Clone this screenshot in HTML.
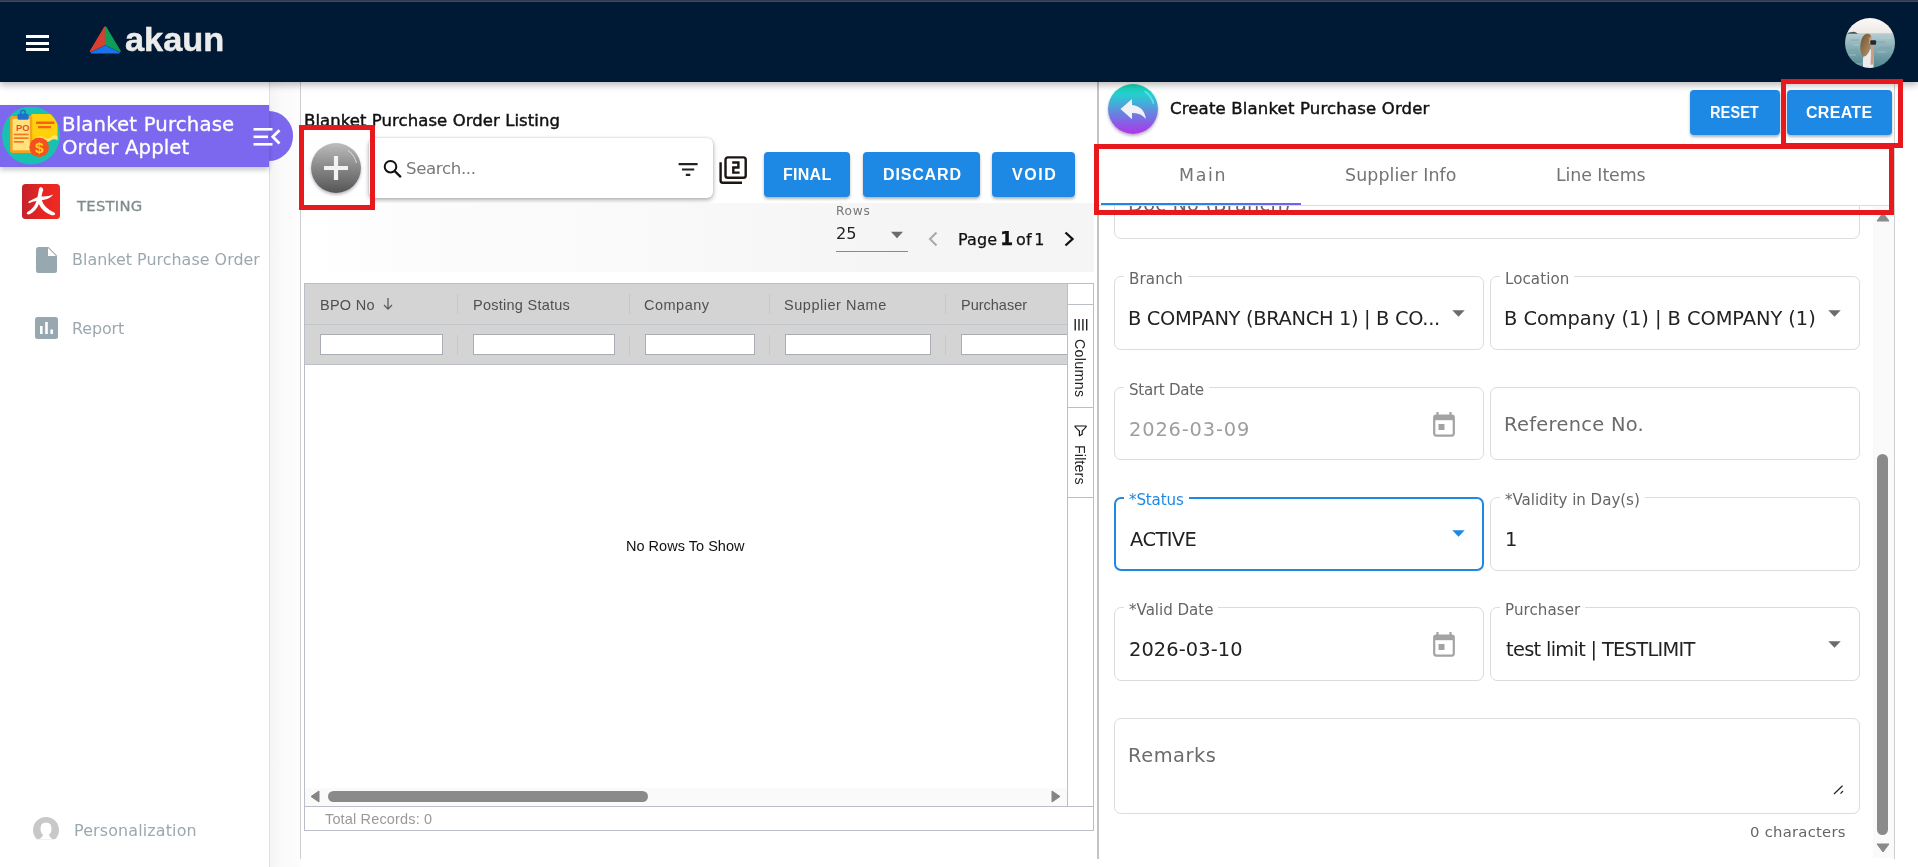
<!DOCTYPE html>
<html lang="en">
<head>
<meta charset="utf-8">
<title>Blanket Purchase Order Applet</title>
<style>
*{box-sizing:border-box;margin:0;padding:0}
html,body{width:1918px;height:867px;overflow:hidden;background:#fff}
body{position:relative;font-family:"DejaVu Sans","Liberation Sans",sans-serif;color:#000}
.lib,.bt,.gh{font-family:"Liberation Sans",sans-serif}
.abs{position:absolute}
.t{position:absolute;white-space:nowrap;line-height:1}
.t,.lbl,.val{will-change:transform}
/* header */
#hdr{left:0;top:0;width:1918px;height:82px;background:#001935;box-shadow:0 3px 7px rgba(0,0,0,.28);z-index:20}
#hdr .strip{left:0;top:0;width:1918px;height:2px;background:linear-gradient(180deg,#333a4e 0,#333a4e 50%,#464853 50%,#464853 100%)}
.hb{left:25.600px;width:23.700px;height:3px;background:#fff}
/* sidebar */
#side{left:0;top:82px;width:269.500px;height:785px;background:#fff;border-right:1px solid #dedede}
#gut{left:269.500px;top:82px;width:31px;height:785px;background:linear-gradient(90deg,#f5f5f5 0%,#fafafa 40%,#fdfdfd 100%)}
#gutb{left:300px;top:82px;width:1px;height:776.500px;background:#cecece}
.pill{left:0;top:105px;width:269.300px;height:62px;background:#7b68ee;box-shadow:0 3px 5px rgba(0,0,0,.22);z-index:5}
.pilltab{left:244px;top:111px;width:49px;height:50px;border-radius:25px;background:#7b68ee;z-index:5}
.nav{color:#9ba8ae;font-size:15.9px}
/* listing */
#list{left:301px;top:82px;width:796px;height:785px;background:#fff}
.btn{position:absolute;background:#1e88e5;color:#fff;font-weight:bold;font-size:16px;border-radius:4px;box-shadow:0 2px 3px rgba(0,0,0,.3);text-align:center}
.bt{color:#fff;font-weight:bold;font-size:16px;z-index:2}
.redbox{position:absolute;border:5px solid #e8191c;z-index:15}
/* grid */
#grid{left:304px;top:283px;width:790px;height:548px;border:1px solid #babfc7;background:#fff}
.gh{color:#505050;font-size:14.5px}
.fi{position:absolute;top:334px;height:21px;background:#fff;border:1px solid #a8adb3}
.sep{position:absolute;width:1px;background:#c6c6c6}
/* right panel */
#rp{left:1097px;top:82px;width:821px;height:776.500px;background:#fff;border-left:2px solid #c4c4c4}
.fld{position:absolute;border:1px solid #dcdcdc;border-radius:7px;background:#fff}
.lbl{position:absolute;white-space:nowrap;line-height:1;font-size:15.1px;color:#666;background:#fff;padding:0 5px}
.val{position:absolute;white-space:nowrap;line-height:1;font-size:19.4px;color:#222}
.tab{color:#747474;font-size:17.4px}
</style>
</head>
<body>

<!-- ===== HEADER ===== -->
<div id="hdr" class="abs">
  <div class="abs strip"></div>
  <div class="abs hb" style="top:35px"></div>
  <div class="abs hb" style="top:41.500px"></div>
  <div class="abs hb" style="top:48px"></div>
  <svg class="abs" style="left:88.500px;top:25.800px" width="32.500" height="30" viewBox="0 0 34 30" preserveAspectRatio="none">
    <path d="M16.6 1.2 L1.6 25.2 L16.6 18.6 Z" fill="#d9402f" stroke="#d9402f" stroke-width="1.6" stroke-linejoin="round"/>
    <path d="M17.4 1.2 L32.4 25.2 L17.4 18.6 Z" fill="#0f9d58" stroke="#0f9d58" stroke-width="1.6" stroke-linejoin="round"/>
    <path d="M17 20.2 L2.6 26.8 L31.4 26.8 Z" fill="#1a73e8" stroke="#1a73e8" stroke-width="1.6" stroke-linejoin="round"/>
  </svg>
  <span class="t lib" id="logo" style="left:124.500px;top:23px;font-size:33px;font-weight:bold;color:#ececec;letter-spacing:0px;transform:scaleX(1.04);transform-origin:left center;-webkit-text-stroke:.5px #ececec">akaun</span>
  <svg class="abs" style="left:1845px;top:18px" width="50" height="50" viewBox="0 0 50 50">
    <defs>
      <clipPath id="avc"><circle cx="25" cy="25" r="25"/></clipPath>
      <linearGradient id="sea" x1="0" y1="0" x2="0" y2="1"><stop offset="0" stop-color="#bcd2d6"/><stop offset=".35" stop-color="#8fb2b9"/><stop offset="1" stop-color="#47808a"/></linearGradient>
      <linearGradient id="sky" x1="0" y1="0" x2="0" y2="1"><stop offset="0" stop-color="#fbfbfa"/><stop offset="1" stop-color="#efe9e5"/></linearGradient>
      <linearGradient id="hair" x1="0" y1="0" x2="1" y2="1"><stop offset="0" stop-color="#6e4f33"/><stop offset="1" stop-color="#b8986a"/></linearGradient>
      <filter id="avb" x="-5%" y="-5%" width="110%" height="110%"><feGaussianBlur stdDeviation=".55"/></filter>
    </defs>
    <g clip-path="url(#avc)">
      <g filter="url(#avb)">
      <rect x="-2" y="14" width="54" height="38" fill="url(#sea)"/>
      <rect x="-2" y="-2" width="54" height="17.200" fill="url(#sky)"/>
      <path d="M2 15.800 q1.500 -2 4 -1.500 q3 -1.300 5 .3 l2 1.200 z" fill="#3d5354"/>
      <path d="M6 22 h8 M30 24 h10 M34 30 h12 M4 32 h9 M31 38 h11 M8 41 h8 M33 45 h8" stroke="#6d9aa2" stroke-width=".8" opacity=".7"/>
      <path d="M8 27 h7 M36 20 h9 M3 37 h8 M32 34 h9 M10 46 h7" stroke="#c3d9dc" stroke-width=".7" opacity=".7"/>
      <path d="M18 50 q-1 -12 3 -18 l6 -1 q2 6 1.500 19z" fill="#eceaed"/>
      <path d="M25.800 27 l3 .5 q.8 8 -.5 19 l-2.800 .3 q.8 -10 .3 -19.800z" fill="#c99f86"/>
      <path d="M21.500 15.800 q4.500 -1 4.800 4 l-.5 7 q-.5 6 -3 9 q-2 3.500 -5.500 2.500 q-3 -7 -1.500 -14 q1.500 -7.500 5.700 -8.500z" fill="url(#hair)"/>
      <path d="M24.500 19 q2.500 -.5 2.300 3 l-.3 4 q-1.500 .8 -2.500 -.5z" fill="#c9a288"/>
      <rect x="25.300" y="22.200" width="5.800" height="4.600" rx="1" fill="#252a2e"/>
      </g>
    </g>
  </svg>
</div>

<!-- ===== SIDEBAR ===== -->
<div id="side" class="abs"></div>
<div id="gut" class="abs"></div><div id="gutb" class="abs"></div>
<div class="abs pilltab"></div>
<div class="abs pill"></div>
<!-- applet icon -->
<svg class="abs" style="left:2px;top:107px;z-index:6" width="58" height="58" viewBox="0 0 58 58">
  <defs><clipPath id="aic"><circle cx="29" cy="28.500" r="29"/></clipPath></defs>
  <circle cx="29" cy="28.500" r="29" fill="#19c2b0"/>
  <g clip-path="url(#aic)">
    <path d="M29 9 q0 -2 2 -2 h22.500 q2 0 2 2 v24.500 q-3.500 -2.500 -7 0 t-7 0 t-7 0 l-5.500 3 z" fill="#ffd10a"/>
    <path d="M34 31 q3.500 -3 7.500 -.5 t7.500 -.5 t6.500 -.5 v3.500 q-3.500 -2 -7 .5 t-7.500 0 t-7 1z" fill="#ffe98a" opacity=".8"/>
    <rect x="34" y="14.500" width="18.500" height="2.600" rx=".6" fill="#f4631e"/>
    <rect x="36" y="19" width="13" height="2.300" rx=".6" fill="#f4631e"/>
    <rect x="8.100" y="9" width="22.200" height="37" rx="2.500" fill="#f5a21e"/>
    <rect x="10.600" y="11.800" width="17.200" height="31.500" rx="1" fill="#ffe27c"/>
    <rect x="15.500" y="6.800" width="11.100" height="6" rx="1.500" fill="#1f6fd0"/>
    <circle cx="21" cy="5.600" r="2.300" fill="none" stroke="#1f6fd0" stroke-width="1.500"/>
    <rect x="11.800" y="26.600" width="14.800" height="1.700" fill="#f47a20"/>
    <rect x="11.800" y="30.300" width="14.800" height="1.700" fill="#f47a20"/>
    <rect x="11.800" y="34" width="10" height="1.700" fill="#f47a20"/>
    <circle cx="37.200" cy="40.300" r="9.800" fill="#f4511e"/>
  </g>
  <text x="14" y="23.800" font-family="Liberation Sans, sans-serif" font-weight="bold" font-size="9" fill="#e8502a" textLength="13.500" lengthAdjust="spacingAndGlyphs">PO</text>
  <text x="32.900" y="46" font-family="Liberation Sans, sans-serif" font-weight="bold" font-size="15.500" fill="#ffd21a">$</text>
</svg>
<span class="t" id="ap1" style="left:62.3px;top:115.00px;font-size:19.7px;color:#fff;z-index:6;letter-spacing:0.166px;-webkit-text-stroke:.3px #fff">Blanket Purchase</span>
<span class="t" id="ap2" style="left:62.3px;top:138.01px;font-size:19.7px;color:#fff;z-index:6;letter-spacing:0.123px;-webkit-text-stroke:.3px #fff">Order Applet</span>
<svg class="abs" style="left:252px;top:126px;z-index:6" width="30" height="22" viewBox="0 0 30 22">
  <g stroke="#fff" stroke-width="2.6" fill="none">
    <path d="M1.5 3.3 H20.5"/><path d="M1.5 10.8 H16"/><path d="M1.5 18.3 H20.5"/>
    <path d="M27.5 4.2 L20.8 10.8 L27.5 17.4" stroke-width="2.8"/>
  </g>
</svg>
<!-- TESTING -->
<svg class="abs" style="left:22px;top:184px" width="38" height="35" viewBox="0 0 38 35">
  <defs><linearGradient id="rg" x1="0" y1="0" x2="1" y2="0"><stop offset="0" stop-color="#c4222c"/><stop offset=".5" stop-color="#e52521"/><stop offset="1" stop-color="#ef2a24"/></linearGradient></defs>
  <rect width="38" height="35" rx="3.5" fill="url(#rg)"/>
  <path d="M19 3 Q22.500 4.500 20.500 8 L19.500 12.500 Q26 12.800 31.500 10.500 Q27 15.500 19.800 16.200 Q22 24 33 29 Q34 31.500 29.500 31.300 Q20.500 28 16.800 20 Q14.500 27 7 30.500 Q3.500 30.500 5.500 28 Q12.500 24 14.500 17 Q10.500 17.500 7 19.300 Q5.500 18 8 16.800 Q12.500 14.500 15.500 13 Q16.500 8 17 5 Q17.500 3 19 3z" fill="#fff"/>
</svg>
<span class="t" id="tst" style="left:77.40px;top:199.01px;font-size:14.8px;color:#7f8c8d;letter-spacing:0.258px;-webkit-text-stroke:.3px #7f8c8d">TESTING</span>
<!-- nav items -->
<svg class="abs" style="left:36px;top:247px" width="21" height="26" viewBox="0 0 21 26">
  <path d="M2.500 0 H12.500 L21 8.500 V23.500 Q21 26 18.500 26 H2.500 Q0 26 0 23.500 V2.500 Q0 0 2.500 0z" fill="#98a8b1"/>
  <path d="M12 1 V9 H20z" fill="#fff"/>
</svg>
<span class="t nav" id="nv1" style="left:71.60px;top:252.00px;letter-spacing:0.033px">Blanket Purchase Order</span>
<svg class="abs" style="left:35px;top:317px" width="23" height="22" viewBox="0 0 23 22">
  <rect width="23" height="22" rx="2.500" fill="#98a8b1"/>
  <rect x="5" y="9" width="2.600" height="8" fill="#fff"/>
  <rect x="10.200" y="5" width="2.600" height="12" fill="#fff"/>
  <rect x="15.400" y="12.500" width="2.600" height="4.500" fill="#fff"/>
</svg>
<span class="t nav" id="nv2" style="left:71.60px;top:321.01px;letter-spacing:-0.091px">Report</span>
<svg class="abs" style="left:33px;top:817px" width="26" height="24" viewBox="0 0 26 24">
  <defs><clipPath id="pc"><rect width="26" height="22.300"/></clipPath></defs>
  <g clip-path="url(#pc)">
    <circle cx="13" cy="13" r="13" fill="#c8c8c8"/>
    <path d="M13 5.500 q5.500 0 5.500 6 q0 4.500 -2.600 6.300 q.3 2.200 4.100 4.700 h-14 q3.800 -2.500 4.100 -4.700 q-2.600 -1.800 -2.600 -6.300 q0 -6 5.500 -6z" fill="#fff"/>
  </g>
</svg>
<span class="t nav" id="nv3" style="left:73.60px;top:823.01px;letter-spacing:0.154px">Personalization</span>

<!-- ===== LISTING ===== -->
<div id="list" class="abs"></div>
<span class="t" id="ltitle" style="left:304px;top:113.00px;font-size:16.5px;color:#111;letter-spacing:0.069px;-webkit-text-stroke:.45px #111">Blanket Purchase Order Listing</span>
<!-- add button -->
<div class="abs" style="left:311px;top:143px;width:50px;height:50px;border-radius:50%;background:linear-gradient(180deg,#bdbdbd 0%,#8c8c8c 45%,#555 100%);box-shadow:0 2px 3px rgba(80,60,110,.35)"></div>
<svg class="abs" style="left:311px;top:143px" width="50" height="50" viewBox="0 0 50 50">
  <path d="M25 13 V37 M13 25 H37" stroke="#f2f2f2" stroke-width="4.200" fill="none"/>
  <path d="M37 7.500 Q43.500 12 45.500 20" stroke="#e6e6e6" stroke-width="1" fill="none" opacity=".85"/>
</svg>
<!-- search box -->
<div class="abs" style="left:369px;top:138px;width:344px;height:60px;background:#fff;border-radius:6px;box-shadow:0 2px 5px rgba(0,0,0,.32),0 0 2px rgba(0,0,0,.15)"></div>
<svg class="abs" style="left:383px;top:158px" width="20" height="21" viewBox="0 0 20 21">
  <circle cx="7.500" cy="8.700" r="5.800" stroke="#111" stroke-width="2" fill="none"/>
  <path d="M11.700 13.100 L17.900 19.100" stroke="#111" stroke-width="2.200" fill="none"/>
</svg>
<span class="t" id="srch" style="left:405.60px;top:161.01px;font-size:16.6px;color:#7a7a7a;letter-spacing:-0.346px">Search...</span>
<svg class="abs" style="left:678px;top:162px" width="20" height="15" viewBox="0 0 20 15">
  <path d="M0.600 2.200 H19.600 M4 7.500 H16.200 M7.800 12.900 H12.300" stroke="#222" stroke-width="2.200" fill="none"/>
</svg>
<!-- copy icon -->
<svg class="abs" style="left:718px;top:155px" width="30" height="30" viewBox="0 0 30 30">
  <rect x="7.500" y="2.400" width="20.200" height="20.300" rx="2.300" stroke="#1d1512" stroke-width="2.400" fill="none"/>
  <path d="M2.600 7.300 V25.400 Q2.600 27.700 4.900 27.700 H24" stroke="#1d1512" stroke-width="2.400" fill="none"/>
  <path d="M14.200 7.500 H20.400 V12.500 H15.300 V17.600 H21.600" stroke="#1d1512" stroke-width="2.400" fill="none"/>
</svg>
<div class="btn" style="left:764px;top:152px;width:86px;height:45px"></div><span class="t bt" id="b1" style="left:783.20px;top:167.01px;letter-spacing:0.266px">FINAL</span>
<div class="btn" style="left:863px;top:152px;width:117px;height:45px"></div><span class="t bt" id="b2" style="left:882.60px;top:167.01px;letter-spacing:0.843px">DISCARD</span>
<div class="btn" style="left:992px;top:152px;width:83px;height:45px"></div><span class="t bt" id="b3" style="left:1011.80px;top:167.01px;letter-spacing:1.547px">VOID</span>
<!-- pagination strip -->
<div class="abs" style="left:304px;top:202.600px;width:790px;height:69.800px;background:linear-gradient(90deg,#fff 0%,#fcfcfc 15%,#f9f9f9 45%,#f5f5f5 75%,#f5f5f5 100%)"></div>
<span class="t" id="rows" style="left:835.60px;top:205.01px;font-size:12.2px;color:#777;letter-spacing:0.683px">Rows</span>
<span class="t" id="r25" style="left:836px;top:226.01px;font-size:16.2px;color:#222">25</span>
<svg class="abs" style="left:890px;top:231px" width="14" height="8" viewBox="0 0 14 8"><path d="M1 .8 H13 L7 7.200z" fill="#6c6c6c"/></svg>
<div class="abs" style="left:836px;top:251px;width:72px;height:1px;background:#8a8a8a"></div>
<svg class="abs" style="left:927px;top:231px" width="12" height="16" viewBox="0 0 12 16"><path d="M9.500 1.500 L3 8 L9.500 14.500" stroke="#a9a9a9" stroke-width="2" fill="none"/></svg>
<span class="t" id="pg" style="left:958.00px;top:229.00px;font-size:16px;color:#111;-webkit-text-stroke:.25px #111;word-spacing:-2.500px;letter-spacing:0.120px">Page <b style="font-size:19px">1</b> of 1</span>
<svg class="abs" style="left:1062px;top:231px" width="14" height="16" viewBox="0 0 14 16"><path d="M3.500 1.500 L10.500 8 L3.500 14.500" stroke="#111" stroke-width="2.300" fill="none"/></svg>
<!-- grid -->
<div id="grid" class="abs"></div>
<div class="abs" style="left:305px;top:284px;width:763px;height:81px;background:#d4d4d4;border-bottom:1px solid #babfc7"></div>
<div class="abs" style="left:305px;top:324px;width:763px;height:1px;background:#c2c5c9"></div>
<span class="t gh" id="h1" style="left:319.60px;top:298.01px;letter-spacing:0.255px">BPO No</span>
<svg class="abs" style="left:382px;top:297px" width="12" height="14" viewBox="0 0 12 14"><path d="M6 1 V12 M2 8 L6 12 L10 8" stroke="#5c5c5c" stroke-width="1.300" fill="none"/></svg>
<span class="t gh" id="h2" style="left:472.60px;top:298.01px;letter-spacing:0.258px">Posting Status</span>
<span class="t gh" id="h3" style="left:644.20px;top:298.01px;letter-spacing:0.500px">Company</span>
<span class="t gh" id="h4" style="left:783.60px;top:298.01px;letter-spacing:0.528px">Supplier Name</span>
<span class="t gh" id="h5" style="left:960.60px;top:298.01px;letter-spacing:-0.009px">Purchaser</span>
<div class="sep" style="left:457px;top:294px;height:20px"></div>
<div class="sep" style="left:629px;top:294px;height:20px"></div>
<div class="sep" style="left:769px;top:294px;height:20px"></div>
<div class="sep" style="left:945px;top:294px;height:20px"></div>
<div class="sep" style="left:457px;top:335px;height:20px"></div>
<div class="sep" style="left:629px;top:335px;height:20px"></div>
<div class="sep" style="left:769px;top:335px;height:20px"></div>
<div class="sep" style="left:945px;top:335px;height:20px"></div>
<div class="fi" style="left:320px;width:123px"></div>
<div class="fi" style="left:473px;width:142px"></div>
<div class="fi" style="left:645px;width:110px"></div>
<div class="fi" style="left:785px;width:146px"></div>
<div class="fi" style="left:961px;width:107px;border-right:0"></div>
<!-- side bar of grid -->
<div class="abs" style="left:1067px;top:284px;width:26px;height:523px;background:#fff;border-left:1px solid #babfc7"></div>
<div class="abs" style="left:1067px;top:304px;width:26px;height:104px;border:1px solid #babfc7;border-right:0"></div>
<div class="abs" style="left:1067px;top:407px;width:26px;height:91px;border:1px solid #babfc7;border-right:0"></div>
<svg class="abs" style="left:1073.600px;top:319.300px" width="14" height="11.500" viewBox="0 0 14 11.500"><path d="M1.200 0 V11.500 M5 0 V11.500 M8.900 0 V11.500 M12.700 0 V11.500" stroke="#222" stroke-width="1.400"/></svg>
<span class="t lib" id="cols" style="left:1072.500px;top:339.300px;font-size:14.200px;color:#222;writing-mode:vertical-rl;letter-spacing:.36px">Columns</span>
<svg class="abs" style="left:1074px;top:424.500px" width="14" height="12" viewBox="0 0 14 12"><path d="M.9 1 H12.300 Q12.300 2.200 8.200 6 V9.300 L5.400 10.800 V6 Q.9 2.200 .9 1z" stroke="#111" stroke-width="1.150" fill="none" stroke-linejoin="round"/></svg>
<span class="t lib" id="filt" style="left:1072.500px;top:445.400px;font-size:14.200px;color:#222;writing-mode:vertical-rl;letter-spacing:.16px">Filters</span>
<span class="t lib" id="norows" style="left:626.20px;top:539.00px;font-size:14.500px;color:#111;letter-spacing:0.018px">No Rows To Show</span>
<!-- h scroll -->
<div class="abs" style="left:305px;top:788px;width:762px;height:19px;background:#fafafa"></div>
<svg class="abs" style="left:310px;top:790px" width="10" height="13" viewBox="0 0 10 13"><path d="M9 1 V12 L1 6.500z" fill="#858585" stroke="#858585" stroke-width="1" stroke-linejoin="round"/></svg>
<div class="abs" style="left:328px;top:791px;width:320px;height:11px;border-radius:6px;background:#8a8a8a"></div>
<svg class="abs" style="left:1051px;top:790px" width="10" height="13" viewBox="0 0 10 13"><path d="M1 1 V12 L9 6.500z" fill="#858585" stroke="#858585" stroke-width="1" stroke-linejoin="round"/></svg>
<div class="abs" style="left:305px;top:806px;width:788px;height:1px;background:#babfc7"></div>
<span class="t lib" id="tot" style="left:325.00px;top:812.01px;font-size:14.500px;color:#9a9a9a;letter-spacing:0.152px">Total Records: 0</span>
<!-- red box on add -->
<div class="redbox" style="left:298.700px;top:125px;width:76.800px;height:85px"></div>

<!-- ===== RIGHT PANEL ===== -->
<div id="rp" class="abs"></div>
<div class="abs" style="left:1108px;top:84px;width:50px;height:50px;border-radius:50%;background:linear-gradient(180deg,#16d6b2 0%,#27cdd0 22%,#4aa6da 42%,#6a80e0 60%,#9550e6 85%,#b038e8 100%);box-shadow:0 2px 3px rgba(60,30,90,.35)"></div>
<svg class="abs" style="left:1108px;top:84px" width="50" height="50" viewBox="0 0 50 50">
  <path d="M24 15 L12.500 25 L24 35.200 V29 Q33 28.500 37.800 35 Q36.500 22.500 24 21z" fill="#f2f2f4"/>
  <path d="M37 7.500 Q43.500 12 45.500 19.500" stroke="#5fe6ea" stroke-width="1.600" fill="none" opacity=".9" stroke-linecap="round"/>
</svg>
<span class="t" id="ctitle" style="left:1169.60px;top:101.01px;font-size:16.5px;color:#111;letter-spacing:0.175px;-webkit-text-stroke:.45px #111">Create Blanket Purchase Order</span>
<div class="btn" style="left:1690px;top:90px;width:90px;height:45px"></div><span class="t bt" id="b4" style="left:1710.4px;top:105.01px;letter-spacing:0px;transform:scaleX(.915);transform-origin:left center">RESET</span>
<div class="btn" style="left:1787px;top:90px;width:105px;height:45px"></div><span class="t bt" id="b5" style="left:1805.80px;top:105.01px;letter-spacing:0.294px">CREATE</span>
<div class="abs" style="left:1099px;top:206px;width:774px;height:652px;overflow:hidden"><div class="abs" style="left:-1099px;top:-206px;width:1918px;height:867px">
<div class="fld" style="left:1114px;top:160px;width:746px;height:79px;"></div>
<span class="lbl" id="l0" style="left:1122.800px;top:194.60px;font-size:19.400px;background:none;letter-spacing:.2px">Doc No (Branch)</span>
<div class="fld" style="left:1114px;top:276px;width:370px;height:74px;"></div>
<span class="lbl" id="l1" style="left:1123.80px;top:272.01px;letter-spacing:0.138px">Branch</span>
<span class="val" id="v1" style="left:1127.80px;top:309.00px;letter-spacing:-0.325px">B COMPANY (BRANCH 1) | B CO...</span>
<svg class="abs" style="left:1452px;top:310px" width="13" height="7" viewBox="0 0 13 7"><path d="M.3 .2 H12.700 L6.500 6.800z" fill="#6b6b6b"/></svg>
<div class="fld" style="left:1490px;top:276px;width:370px;height:74px;"></div>
<span class="lbl" id="l2" style="left:1499.80px;top:272.01px;letter-spacing:0.057px">Location</span>
<span class="val" id="v2" style="left:1503.80px;top:309.00px;letter-spacing:-0.042px">B Company (1) | B COMPANY (1)</span>
<svg class="abs" style="left:1828px;top:310px" width="13" height="7" viewBox="0 0 13 7"><path d="M.3 .2 H12.700 L6.500 6.800z" fill="#6b6b6b"/></svg>
<div class="fld" style="left:1114px;top:387px;width:370px;height:73px;"></div>
<span class="lbl" id="l3" style="left:1123.80px;top:383.00px;letter-spacing:-0.291px">Start Date</span>
<span class="val" id="v3" style="left:1128.80px;top:420.01px;color:#9e9e9e;letter-spacing:0.851px">2026-03-09</span>
<svg class="abs" style="left:1433px;top:412px" width="22" height="25" viewBox="0 0 22 25">
  <path d="M4.500 0 V4 M17.500 0 V4" stroke="#a3a3a3" stroke-width="2.200"/>
  <rect x="1.200" y="3.600" width="19.600" height="20" rx="2" stroke="#a3a3a3" stroke-width="2.200" fill="none"/>
  <rect x="1.200" y="3.600" width="19.600" height="4.600" fill="#a3a3a3"/>
  <rect x="5.500" y="12" width="6" height="6" fill="#a3a3a3"/>
</svg>
<div class="fld" style="left:1490px;top:387px;width:370px;height:73px;"></div>
<span class="val" id="v4" style="left:1503.80px;top:415.00px;color:#6b6b6b;letter-spacing:0.313px">Reference No.</span>
<div class="fld" style="left:1114px;top:497px;width:370px;height:74px;border:2px solid #1e88e5"></div>
<span class="lbl" id="l5" style="left:1123.80px;top:493.01px;color:#1e88e5;letter-spacing:-0.150px">*Status</span>
<span class="val" id="v5" style="left:1129.80px;top:530.01px;letter-spacing:-0.539px">ACTIVE</span>
<svg class="abs" style="left:1452px;top:530px" width="13" height="7" viewBox="0 0 13 7"><path d="M.3 .2 H12.700 L6.500 6.800z" fill="#1e88e5"/></svg>
<div class="fld" style="left:1490px;top:497px;width:370px;height:74px;"></div>
<span class="lbl" id="l6" style="left:1499.80px;top:493.01px;letter-spacing:-0.054px">*Validity in Day(s)</span>
<span class="val" id="v6" style="left:1505px;top:530.01px;">1</span>
<div class="fld" style="left:1114px;top:607px;width:370px;height:74px;"></div>
<span class="lbl" id="l7" style="left:1123.80px;top:603.01px;letter-spacing:-0.028px">*Valid Date</span>
<span class="val" id="v7" style="left:1128.80px;top:640.01px;letter-spacing:0.092px">2026-03-10</span>
<svg class="abs" style="left:1433px;top:632px" width="22" height="25" viewBox="0 0 22 25">
  <path d="M4.500 0 V4 M17.500 0 V4" stroke="#a3a3a3" stroke-width="2.200"/>
  <rect x="1.200" y="3.600" width="19.600" height="20" rx="2" stroke="#a3a3a3" stroke-width="2.200" fill="none"/>
  <rect x="1.200" y="3.600" width="19.600" height="4.600" fill="#a3a3a3"/>
  <rect x="5.500" y="12" width="6" height="6" fill="#a3a3a3"/>
</svg>
<div class="fld" style="left:1490px;top:607px;width:370px;height:74px;"></div>
<span class="lbl" id="l8" style="left:1499.80px;top:603.01px;letter-spacing:0.061px">Purchaser</span>
<span class="val" id="v8" style="left:1505.80px;top:640.01px;letter-spacing:-0.693px">test limit | TESTLIMIT</span>
<svg class="abs" style="left:1828px;top:641px" width="13" height="7" viewBox="0 0 13 7"><path d="M.3 .2 H12.700 L6.500 6.800z" fill="#6b6b6b"/></svg>
<div class="fld" style="left:1114px;top:718px;width:746px;height:96px;"></div>
<span class="val" id="v9" style="left:1127.80px;top:746.00px;color:#6b6b6b;letter-spacing:0.549px">Remarks</span>
<svg class="abs" style="left:1833px;top:785px" width="11" height="10" viewBox="0 0 11 10"><path d="M1 9 L9.500 .8 M7.500 8.700 L10 6" stroke="#222" stroke-width="1.200" fill="none"/></svg>
<span class="t" id="chars" style="left:1749.80px;top:825.01px;font-size:14.8px;color:#666;letter-spacing:0.255px">0 characters</span>
</div></div>
<div class="abs" style="left:1099px;top:205px;width:795px;height:1px;background:#dcdcdc"></div>
<div class="abs" style="left:1101px;top:203px;width:200px;height:2px;background:linear-gradient(90deg,#1e88e5 0%,#2f80e8 55%,#7b5cf0 100%)"></div>
<span class="t tab" id="t1" style="left:1178.60px;top:167.01px;letter-spacing:1.633px">Main</span>
<span class="t tab" id="t2" style="left:1345.00px;top:167.01px;letter-spacing:0.111px">Supplier Info</span>
<span class="t tab" id="t3" style="left:1555.60px;top:167.01px;letter-spacing:-0.087px">Line Items</span>
<div class="abs" style="left:1873px;top:206px;width:21px;height:652px;background:#fafafa"></div>
<svg class="abs" style="left:1876px;top:212px" width="14" height="10" viewBox="0 0 14 10"><path d="M7 1 L13 9 H1z" fill="#8a8a8a" stroke="#8a8a8a" stroke-width="1" stroke-linejoin="round"/></svg>
<div class="abs" style="left:1877px;top:454px;width:11px;height:381px;border-radius:6px;background:#8a8a8a"></div>
<svg class="abs" style="left:1876px;top:843px" width="14" height="10" viewBox="0 0 14 10"><path d="M1 1 H13 L7 9z" fill="#8a8a8a" stroke="#8a8a8a" stroke-width="1" stroke-linejoin="round"/></svg>
<div class="abs" style="left:1894px;top:82px;width:1px;height:776.500px;background:#d0d0d0"></div>
<div class="redbox" style="left:1094px;top:143.600px;width:800px;height:71.200px"></div>
<div class="redbox" style="left:1781.400px;top:78.600px;width:121.400px;height:69.600px;z-index:25"></div>

</body>
</html>
